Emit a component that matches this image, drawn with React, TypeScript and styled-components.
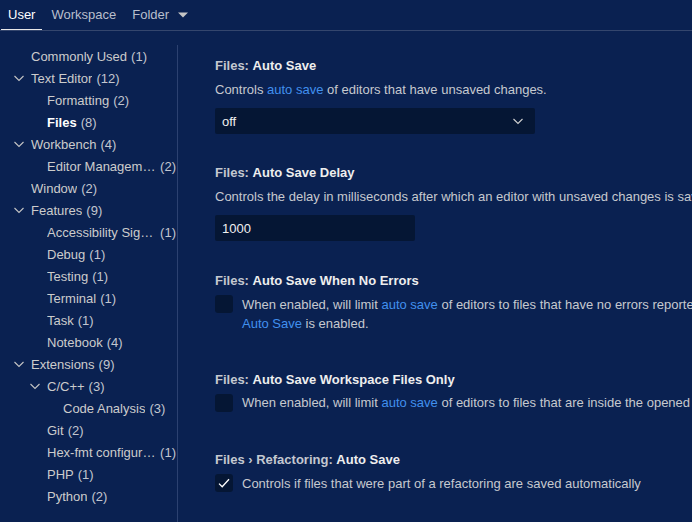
import React from 'react'
import styled, { createGlobalStyle } from 'styled-components'

const FONT = '"Segoe UI", "Liberation Sans", sans-serif'
const BG = '#0a2151'

const GlobalStyle = createGlobalStyle`
  html, body {
    margin: 0;
    padding: 0;
    background: ${BG};
  }
  body {
    font-family: ${FONT};
    font-size: 13px;
    color: #cccccc;
  }
`

const Page = styled.div`
  width: 100vw;
  height: 100vh;
  overflow: hidden;
  display: flex;
  flex-direction: column;
`

const TabBar = styled.div`
  display: flex;
  align-items: stretch;
  height: 30px;
  border-bottom: 1px solid #34466d;
  padding-left: 1px;
  flex-shrink: 0;
`

const Tab = styled.div<{ $active?: boolean }>`
  display: flex;
  align-items: center;
  padding: 0 7px 1px;
  margin-right: 2px;
  color: ${p => (p.$active ? '#ffffff' : '#b9bfcc')};
  box-shadow: ${p => (p.$active ? 'inset 0 -1px 0 #e8e8e8' : 'none')};
`

const Caret = styled.svg`
  margin-left: 9px;
`

const Body = styled.div`
  flex: 1;
  display: flex;
  margin-top: 14px;
  min-height: 0;
`

const Sidebar = styled.div`
  width: 177px;
  flex-shrink: 0;
  border-right: 1px solid #2c4170;
`

const TreeRow = styled.div<{ $level: number }>`
  display: flex;
  align-items: center;
  height: 22px;
  padding-left: ${p => 11 + p.$level * 16}px;
  padding-right: 1px;
  white-space: nowrap;
`

const Twistie = styled.span`
  width: 16px;
  height: 16px;
  margin-right: 4px;
  flex-shrink: 0;
  display: flex;
  align-items: center;
  justify-content: center;
`

const TreeLabel = styled.span<{ $selected?: boolean }>`
  overflow: hidden;
  text-overflow: ellipsis;
  min-width: 0;
  color: ${p => (p.$selected ? '#ffffff' : '#cccccc')};
  font-weight: ${p => (p.$selected ? 700 : 400)};
`

const Count = styled.span`
  flex-shrink: 0;
  margin-left: 4px;
  color: #c2c6cf;
`

const Content = styled.div`
  flex: 1;
  min-width: 0;
  overflow: hidden;
  padding: 12px 0 0 37px;
`

const Setting = styled.div<{ $tail: number }>`
  padding-bottom: ${p => p.$tail}px;
`

const Title = styled.div`
  line-height: 18px;
  font-weight: 600;
  color: #c4c8d0;
  white-space: nowrap;
  b {
    color: #eeeeee;
    font-weight: 700;
  }
`

const Desc = styled.div`
  margin-top: 5px;
  line-height: 19px;
  white-space: nowrap;
  color: #c6c9cf;
`

const Link = styled.span`
  color: #4190ee;
`

const Select = styled.div`
  margin-top: 9px;
  width: 320px;
  height: 26px;
  box-sizing: border-box;
  background: #051634;
  border-radius: 2px;
  display: flex;
  align-items: center;
  justify-content: space-between;
  padding: 0 9px 0 7px;
  color: #f0f0f0;
`

const NumberInput = styled(Select)`
  width: 200px;
`

const BoolRow = styled.div`
  display: flex;
  align-items: flex-start;
  margin-top: 5px;
`

const Check = styled.div`
  width: 18px;
  height: 18px;
  flex-shrink: 0;
  margin-right: 9px;
  border-radius: 3px;
  background: #051634;
  display: flex;
  align-items: center;
  justify-content: center;
`

const BoolText = styled(Desc)`
  margin-top: -0.5px;
`

const Chevron = ({ color = '#c5c5c5', size = 16 }: { color?: string; size?: number }) => (
  <svg width={size} height={size} viewBox="0 0 16 16" fill="none">
    <path d="M3.5 6 L8 10.5 L12.5 6" stroke={color} strokeWidth="1.1" />
  </svg>
)

type Node = { label: string; count: number; level: number; open?: boolean; selected?: boolean }

const tree: Node[] = [
  { label: 'Commonly Used', count: 1, level: 0 },
  { label: 'Text Editor', count: 12, level: 0, open: true },
  { label: 'Formatting', count: 2, level: 1 },
  { label: 'Files', count: 8, level: 1, selected: true },
  { label: 'Workbench', count: 4, level: 0, open: true },
  { label: 'Editor Management', count: 2, level: 1 },
  { label: 'Window', count: 2, level: 0 },
  { label: 'Features', count: 9, level: 0, open: true },
  { label: 'Accessibility Signals', count: 1, level: 1 },
  { label: 'Debug', count: 1, level: 1 },
  { label: 'Testing', count: 1, level: 1 },
  { label: 'Terminal', count: 1, level: 1 },
  { label: 'Task', count: 1, level: 1 },
  { label: 'Notebook', count: 4, level: 1 },
  { label: 'Extensions', count: 9, level: 0, open: true },
  { label: 'C/C++', count: 3, level: 1, open: true },
  { label: 'Code Analysis', count: 3, level: 2 },
  { label: 'Git', count: 2, level: 1 },
  { label: 'Hex-fmt configuration', count: 1, level: 1 },
  { label: 'PHP', count: 1, level: 1 },
  { label: 'Python', count: 2, level: 1 },
]

const CheckBox = ({ checked }: { checked?: boolean }) => (
  <Check>
    {checked && (
      <svg width="16" height="16" viewBox="0 0 16 16" fill="none">
        <path d="M3 8.6 L6.2 11.8 L13 4.2" stroke="#ffffff" strokeWidth="1.3" />
      </svg>
    )}
  </Check>
)

export default () => (
  <Page>
    <GlobalStyle />
    <TabBar>
      <Tab $active>User</Tab>
      <Tab>Workspace</Tab>
      <Tab>
        Folder
        <Caret width="10" height="6" viewBox="0 0 10 6">
          <path d="M0 0.5 L10 0.5 L5 5.5 Z" fill="#c5c5c5" />
        </Caret>
      </Tab>
    </TabBar>
    <Body>
      <Sidebar>
        {tree.map(n => (
          <TreeRow key={n.label} $level={n.level}>
            <Twistie>{n.open && <Chevron />}</Twistie>
            <TreeLabel $selected={n.selected}>{n.label}</TreeLabel>
            <Count>({n.count})</Count>
          </TreeRow>
        ))}
      </Sidebar>
      <Content>
        <Setting $tail={30}>
          <Title>
            Files: <b>Auto Save</b>
          </Title>
          <Desc>
            Controls <Link>auto save</Link> of editors that have unsaved changes.
          </Desc>
          <Select>
            off
            <Chevron color="#d0d0d0" />
          </Select>
        </Setting>
        <Setting $tail={31}>
          <Title>
            Files: <b>Auto Save Delay</b>
          </Title>
          <Desc>
            Controls the delay in milliseconds after which an editor with unsaved changes is saved
            automatically. Only applies when <Link>Auto Save</Link> is set to afterDelay.
          </Desc>
          <NumberInput>1000</NumberInput>
        </Setting>
        <Setting $tail={38}>
          <Title>
            Files: <b>Auto Save When No Errors</b>
          </Title>
          <BoolRow>
            <CheckBox />
            <BoolText>
              When enabled, will limit <Link>auto save</Link> of editors to files that have no errors
              reported in them at the time the save is triggered. Only applies when
              <br />
              <Link>Auto Save</Link> is enabled.
            </BoolText>
          </BoolRow>
        </Setting>
        <Setting $tail={39}>
          <Title>
            Files: <b>Auto Save Workspace Files Only</b>
          </Title>
          <BoolRow>
            <CheckBox />
            <BoolText>
              When enabled, will limit <Link>auto save</Link> of editors to files that are inside the
              opened workspace. Only applies when <Link>Auto Save</Link> is enabled.
            </BoolText>
          </BoolRow>
        </Setting>
        <Setting $tail={30}>
          <Title>
            Files › Refactoring: <b>Auto Save</b>
          </Title>
          <BoolRow>
            <CheckBox checked />
            <BoolText>Controls if files that were part of a refactoring are saved automatically</BoolText>
          </BoolRow>
        </Setting>
      </Content>
    </Body>
  </Page>
)
